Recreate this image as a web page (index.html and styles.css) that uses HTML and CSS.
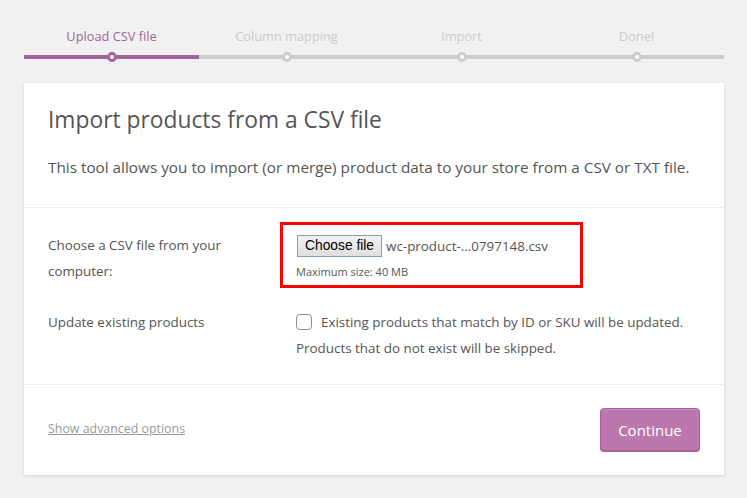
FILE: index.html
```html
<!DOCTYPE html>
<html>
<head>
<meta charset="utf-8">
<link rel="stylesheet" href="styles.css">
</head>
<body>
<ol class="steps">
  <li class="step active">Upload CSV file</li>
  <li class="step">Column mapping</li>
  <li class="step">Import</li>
  <li class="step">Done!</li>
</ol>
<section class="card">
  <header class="card-head">
    <h1 class="title">Import products from a CSV file</h1>
    <p class="intro">This tool allows you to import (or merge) product data to your store from a CSV or TXT file.</p>
  </header>
  <div class="card-body">
    <div class="row">
      <label class="row-label">Choose a CSV file from your computer:</label>
      <div class="row-field upload">
        <div class="file-line">
          <span class="file-btn">Choose file</span>
          <span class="file-name">wc-product-...0797148.csv</span>
        </div>
        <small class="hint">Maximum size: 40 MB</small>
        <span class="highlight"></span>
      </div>
    </div>
    <div class="row">
      <label class="row-label">Update existing products</label>
      <div class="row-field">
        <div class="check-line"><span class="checkbox"></span><span>Existing products that match by ID or SKU will be updated.</span></div>
        <div>Products that do not exist will be skipped.</div>
      </div>
    </div>
  </div>
  <footer class="card-foot">
    <a class="adv-link" href="#">Show advanced options</a>
    <button class="continue">Continue</button>
  </footer>
</section>
</body>
</html>
```
FILE: styles.css
```css
html, body {
  margin: 0;
  padding: 0;
}
body {
  background: #f1f1f1;
  font-family: "Open Sans", "Noto Sans", sans-serif;
  color: #555;
  width: 747px;
  height: 498px;
  overflow: hidden;
}
.steps {
  list-style: none;
  margin: 0 23px 0 24px;
  padding: 27px 0 0 0;
  display: flex;
}
.step {
  flex: 1;
  text-align: center;
  font-size: 12.8px;
  line-height: 18px;
  color: #ccc;
  padding-bottom: 10px;
  border-bottom: 4px solid #ccc;
  position: relative;
}
.step::after {
  content: "";
  position: absolute;
  left: 50%;
  bottom: -7px;
  margin-left: -5px;
  width: 4px;
  height: 4px;
  border: 3px solid #ccc;
  border-radius: 50%;
  background: #fff;
}
.step.active {
  color: #a46497;
  border-bottom-color: #a46497;
}
.step.active::after {
  border-color: #a46497;
}
.card {
  margin: 24px 23px 0 24px;
  background: #fff;
  box-shadow: 0 1px 3px rgba(0, 0, 0, 0.13);
}
.card-head {
  padding: 21px 24px 0;
  border-bottom: 1px solid #eee;
  height: 103px;
}
.title {
  margin: 0;
  font-size: 22.8px;
  font-weight: 400;
  line-height: 32px;
  color: #555;
}
.intro {
  margin: 20px 0 0;
  font-size: 15.3px;
  line-height: 22px;
}
.card-body {
  padding: 24px 24px 23px;
  border-bottom: 1px solid #eee;
  font-size: 13.4px;
  line-height: 26px;
}
.row {
  display: grid;
  grid-template-columns: 200px 1fr;
  column-gap: 48px;
}
.row + .row {
  margin-top: 25px;
}
.row-label {
  display: block;
}
.row-field {
  position: relative;
}
.file-line {
  display: flex;
  align-items: center;
  height: 28px;
}
.file-btn {
  font-family: "Liberation Sans", Arial, sans-serif;
  font-size: 13.8px;
  color: #000;
  line-height: 20px;
  height: 20px;
  padding: 0 7px;
  border: 1px solid #8a9db5;
  background: linear-gradient(#f2f2f2, #e0e0e0);
  margin-left: 1px;
}
.file-name {
  margin-left: 4px;
  font-size: 13.4px;
}
.hint {
  display: block;
  font-size: 11px;
  line-height: 20px;
  margin-top: 2px;
}
.highlight {
  position: absolute;
  left: -16px;
  top: -10px;
  width: 297px;
  height: 60px;
  border: 3px solid #f00;
}
.check-line {
  display: flex;
  align-items: center;
}
.checkbox {
  width: 14px;
  height: 14px;
  border: 1px solid #8c8f94;
  border-radius: 4px;
  margin-right: 9px;
  flex: none;
}
.card-foot {
  display: flex;
  justify-content: space-between;
  align-items: center;
  padding: 23px 24px 24px;
}
.adv-link {
  color: #999;
  font-size: 12.4px;
  text-decoration: underline;
  margin-bottom: 3px;
}
.continue {
  font-family: "Open Sans", "Noto Sans", sans-serif;
  width: 100px;
  height: 43px;
  font-size: 15px;
  color: #fff;
  background: #bb77ae;
  border: 1px solid #a36597;
  border-radius: 4px;
  box-shadow: inset 0 1px 0 rgba(255,255,255,.15), 0 1px 0 #a36597;
  padding: 0;
}
```
